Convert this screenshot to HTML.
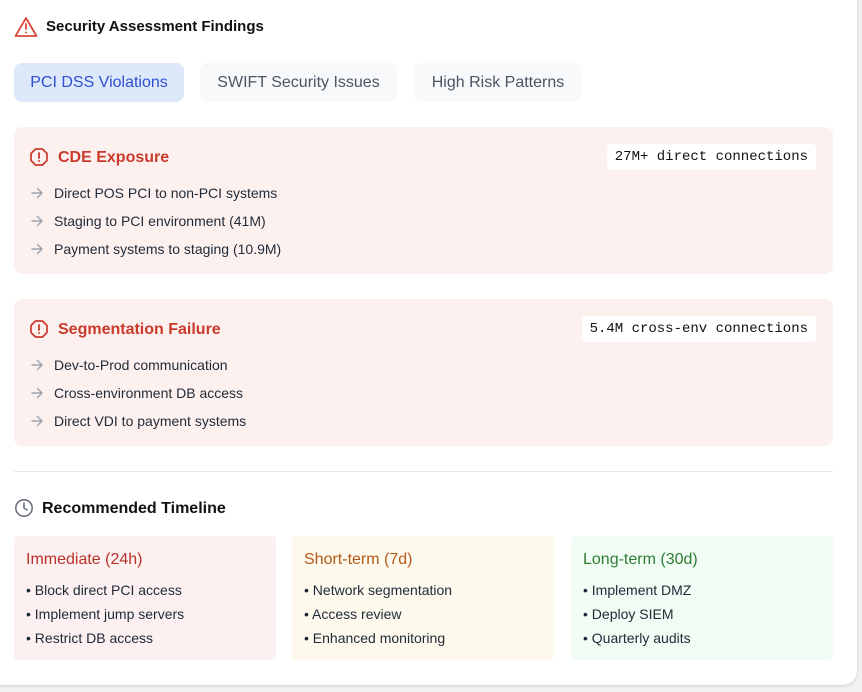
<!DOCTYPE html>
<html><head><meta charset="utf-8"><style>
*{box-sizing:border-box;margin:0;padding:0}
body{width:862px;height:692px;background:#f1f1f1;font-family:"Liberation Sans",sans-serif;position:relative;overflow:hidden;color:#111827}
.card{position:absolute;left:-20px;top:-20px;width:877px;height:705px;background:#fff;border-radius:14px;box-shadow:0 1px 3px rgba(0,0,0,.15)}
.abs{position:absolute}
.h{font-size:16px;font-weight:bold;color:#111}
.tab{position:absolute;top:63px;height:39px;border-radius:8px;font-size:16px;line-height:39px;text-align:center;background:#f8f9fb;color:#4b5563}
.box{position:absolute;left:14px;width:819px;background:#fdf1f0;border-radius:8px}
.bt{position:absolute;left:44px;font-size:16px;color:#c93a2b;font-weight:bold}
.pill{position:absolute;right:17px;height:26px;background:#fff;border-radius:4px;font-family:"Liberation Mono",monospace;font-size:14px;line-height:26px;padding:0 8px;color:#111}
.it{position:absolute;left:40px;font-size:14px;color:#1f2937}
.ar{position:absolute;left:16px}
.tc{position:absolute;top:536px;height:124px;width:262px;border-radius:4px}
.tc h4{position:absolute;left:12px;top:15px;font-size:16px;font-weight:normal}
.tc p{position:absolute;left:12px;font-size:14px;color:#1f2937}
</style></head><body>
<div class="card"></div>
<svg class="abs" style="left:14px;top:16px" width="24" height="22" viewBox="0 0 24 22"><path d="M12 2 L22.5 20 H1.5 Z" fill="none" stroke="#dc4a3c" stroke-width="1.8" stroke-linejoin="round"/><path d="M12 8v5" stroke="#dc4a3c" stroke-width="1.8" stroke-linecap="round"/><circle cx="12" cy="16.5" r="1" fill="#dc4a3c"/></svg>
<div class="abs h" style="left:46px;top:18px;font-size:15px">Security Assessment Findings</div>
<div class="tab" style="left:14px;width:170px;background:#dde8fb;color:#2f4fd0">PCI DSS Violations</div>
<div class="tab" style="left:200px;width:197px">SWIFT Security Issues</div>
<div class="tab" style="left:414px;width:168px">High Risk Patterns</div>

<div class="box" style="top:127px;height:147px">
<svg class="abs" style="left:15px;top:20px" width="20" height="20" viewBox="0 0 20 20"><path d="M6.5 2h7l4.5 4.5v7L13.5 18h-7L2 13.5v-7Z" fill="none" stroke="#c93a2b" stroke-width="1.7" stroke-linejoin="round"/><path d="M10 6v5" stroke="#c93a2b" stroke-width="1.8" stroke-linecap="round"/><circle cx="10" cy="14" r="1" fill="#c93a2b"/></svg>
<div class="bt" style="top:22px">CDE Exposure</div>
<div class="pill" style="top:17px">27M+ direct connections</div>
<svg class="ar" style="top:60px" width="14" height="12" viewBox="0 0 14 12"><path d="M2 6h10M7.5 1.5 12 6l-4.5 4.5" fill="none" stroke="#9ca3af" stroke-width="1.4" stroke-linecap="round" stroke-linejoin="round"/></svg>
<div class="it" style="top:58px">Direct POS PCI to non-PCI systems</div>
<svg class="ar" style="top:88px" width="14" height="12" viewBox="0 0 14 12"><path d="M2 6h10M7.5 1.5 12 6l-4.5 4.5" fill="none" stroke="#9ca3af" stroke-width="1.4" stroke-linecap="round" stroke-linejoin="round"/></svg>
<div class="it" style="top:86px">Staging to PCI environment (41M)</div>
<svg class="ar" style="top:116px" width="14" height="12" viewBox="0 0 14 12"><path d="M2 6h10M7.5 1.5 12 6l-4.5 4.5" fill="none" stroke="#9ca3af" stroke-width="1.4" stroke-linecap="round" stroke-linejoin="round"/></svg>
<div class="it" style="top:114px">Payment systems to staging (10.9M)</div>
</div>
<div class="box" style="top:299px;height:147px">
<svg class="abs" style="left:15px;top:20px" width="20" height="20" viewBox="0 0 20 20"><path d="M6.5 2h7l4.5 4.5v7L13.5 18h-7L2 13.5v-7Z" fill="none" stroke="#c93a2b" stroke-width="1.7" stroke-linejoin="round"/><path d="M10 6v5" stroke="#c93a2b" stroke-width="1.8" stroke-linecap="round"/><circle cx="10" cy="14" r="1" fill="#c93a2b"/></svg>
<div class="bt" style="top:22px">Segmentation Failure</div>
<div class="pill" style="top:17px">5.4M cross-env connections</div>
<svg class="ar" style="top:60px" width="14" height="12" viewBox="0 0 14 12"><path d="M2 6h10M7.5 1.5 12 6l-4.5 4.5" fill="none" stroke="#9ca3af" stroke-width="1.4" stroke-linecap="round" stroke-linejoin="round"/></svg>
<div class="it" style="top:58px">Dev-to-Prod communication</div>
<svg class="ar" style="top:88px" width="14" height="12" viewBox="0 0 14 12"><path d="M2 6h10M7.5 1.5 12 6l-4.5 4.5" fill="none" stroke="#9ca3af" stroke-width="1.4" stroke-linecap="round" stroke-linejoin="round"/></svg>
<div class="it" style="top:86px">Cross-environment DB access</div>
<svg class="ar" style="top:116px" width="14" height="12" viewBox="0 0 14 12"><path d="M2 6h10M7.5 1.5 12 6l-4.5 4.5" fill="none" stroke="#9ca3af" stroke-width="1.4" stroke-linecap="round" stroke-linejoin="round"/></svg>
<div class="it" style="top:114px">Direct VDI to payment systems</div>
</div>
<div class="abs" style="left:14px;top:471px;width:819px;height:1px;background:#e5e7eb"></div>
<svg class="abs" style="left:14px;top:498px" width="20" height="20" viewBox="0 0 20 20"><circle cx="10" cy="10" r="8.2" fill="none" stroke="#6b7280" stroke-width="1.6"/><path d="M10 5v5l3 2" fill="none" stroke="#6b7280" stroke-width="1.6" stroke-linecap="round"/></svg>
<div class="abs h" style="left:42px;top:500px">Recommended Timeline</div>

<div class="tc" style="left:14px;background:#fcf1f0"><h4 style="color:#b7322a">Immediate (24h)</h4>
<p style="top:46px">• Block direct PCI access</p><p style="top:70px">• Implement jump servers</p><p style="top:94px">• Restrict DB access</p></div>
<div class="tc" style="left:292px;background:#fdf9ec"><h4 style="color:#b45a1a">Short-term (7d)</h4>
<p style="top:46px">• Network segmentation</p><p style="top:70px">• Access review</p><p style="top:94px">• Enhanced monitoring</p></div>
<div class="tc" style="left:571px;background:#f1fcf4"><h4 style="color:#2e7d32">Long-term (30d)</h4>
<p style="top:46px">• Implement DMZ</p><p style="top:70px">• Deploy SIEM</p><p style="top:94px">• Quarterly audits</p></div>
</body></html>
